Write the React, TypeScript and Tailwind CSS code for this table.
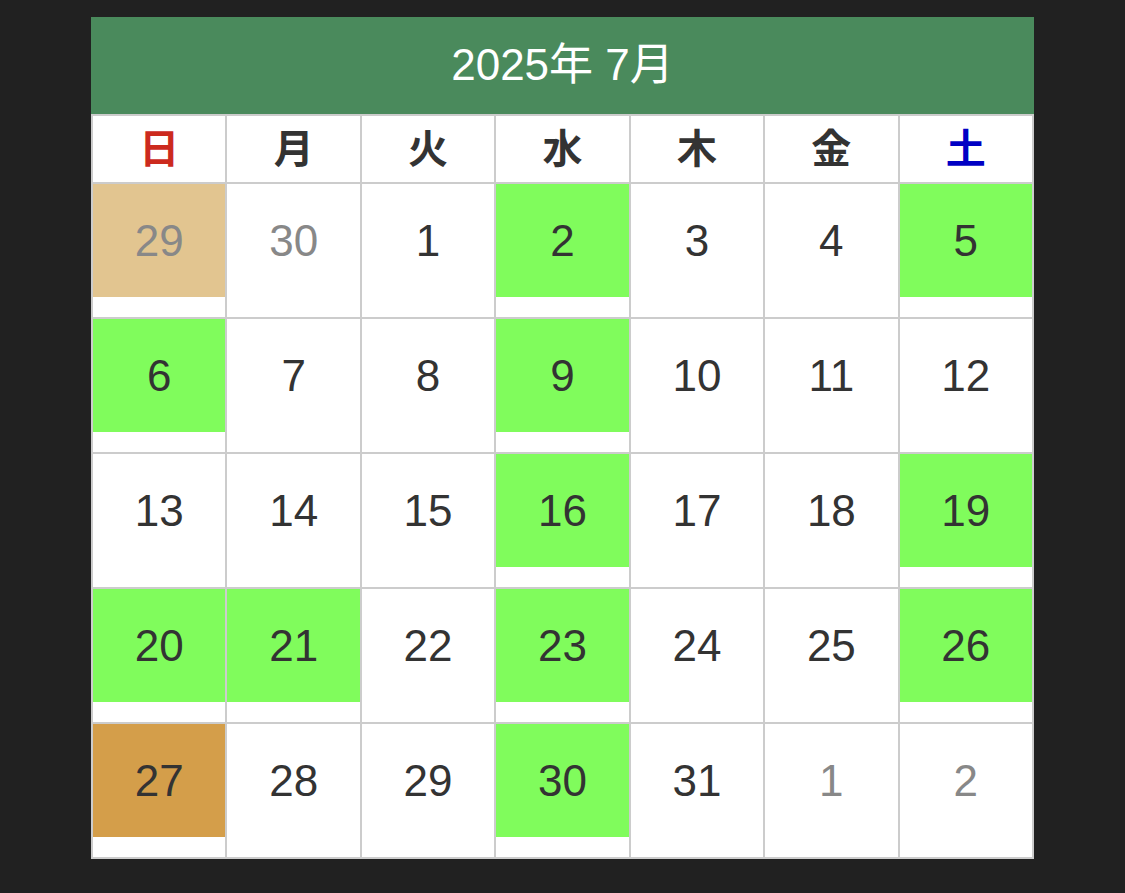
const weekdays = [
  { label: '日', color: 'text-[#cc2a1e]' },
  { label: '月', color: 'text-[#333333]' },
  { label: '火', color: 'text-[#333333]' },
  { label: '水', color: 'text-[#333333]' },
  { label: '木', color: 'text-[#333333]' },
  { label: '金', color: 'text-[#333333]' },
  { label: '土', color: 'text-[#0000c4]' },
];

type Day = { n: number; other?: boolean; bg?: string };

const green = 'bg-[#80fc5c]';

const days: Day[] = [
  { n: 29, other: true, bg: 'bg-[#e2c590]' },
  { n: 30, other: true },
  { n: 1 },
  { n: 2, bg: green },
  { n: 3 },
  { n: 4 },
  { n: 5, bg: green },
  { n: 6, bg: green },
  { n: 7 },
  { n: 8 },
  { n: 9, bg: green },
  { n: 10 },
  { n: 11 },
  { n: 12 },
  { n: 13 },
  { n: 14 },
  { n: 15 },
  { n: 16, bg: green },
  { n: 17 },
  { n: 18 },
  { n: 19, bg: green },
  { n: 20, bg: green },
  { n: 21, bg: green },
  { n: 22 },
  { n: 23, bg: green },
  { n: 24 },
  { n: 25 },
  { n: 26, bg: green },
  { n: 27, bg: 'bg-[#d49e4a]' },
  { n: 28 },
  { n: 29 },
  { n: 30, bg: green },
  { n: 31 },
  { n: 1, other: true },
  { n: 2, other: true },
];

export default function App() {
  return (
    <div className="min-h-[893px] bg-[#212121] pt-[17px] pl-[91px] font-['Liberation_Sans','Noto_Sans_CJK_JP',sans-serif]">
      <div className="w-[943px]">
        {/* 月見出し */}
        <div className="h-[97px] bg-[#4a8a5c] flex items-center justify-center text-white text-[44px] pb-[2px]">
          2025年 7月
        </div>

        {/* 曜日と日付 */}
        <div className="grid grid-cols-7 gap-[2px] p-[2px] bg-[#cccccc]">
          {weekdays.map((w) => (
            <div
              key={w.label}
              className={`h-[66px] bg-white flex items-center justify-center font-bold text-[40px] ${w.color}`}
            >
              {w.label}
            </div>
          ))}
          {days.map((d, i) => (
            <div key={i} className="h-[133px] bg-white">
              <div
                className={`h-[113px] flex items-center justify-center text-[44px] ${d.bg ?? 'bg-white'} ${
                  d.other ? 'text-[#888888]' : 'text-[#333333]'
                }`}
              >
                {d.n}
              </div>
            </div>
          ))}
        </div>
      </div>
    </div>
  );
}
